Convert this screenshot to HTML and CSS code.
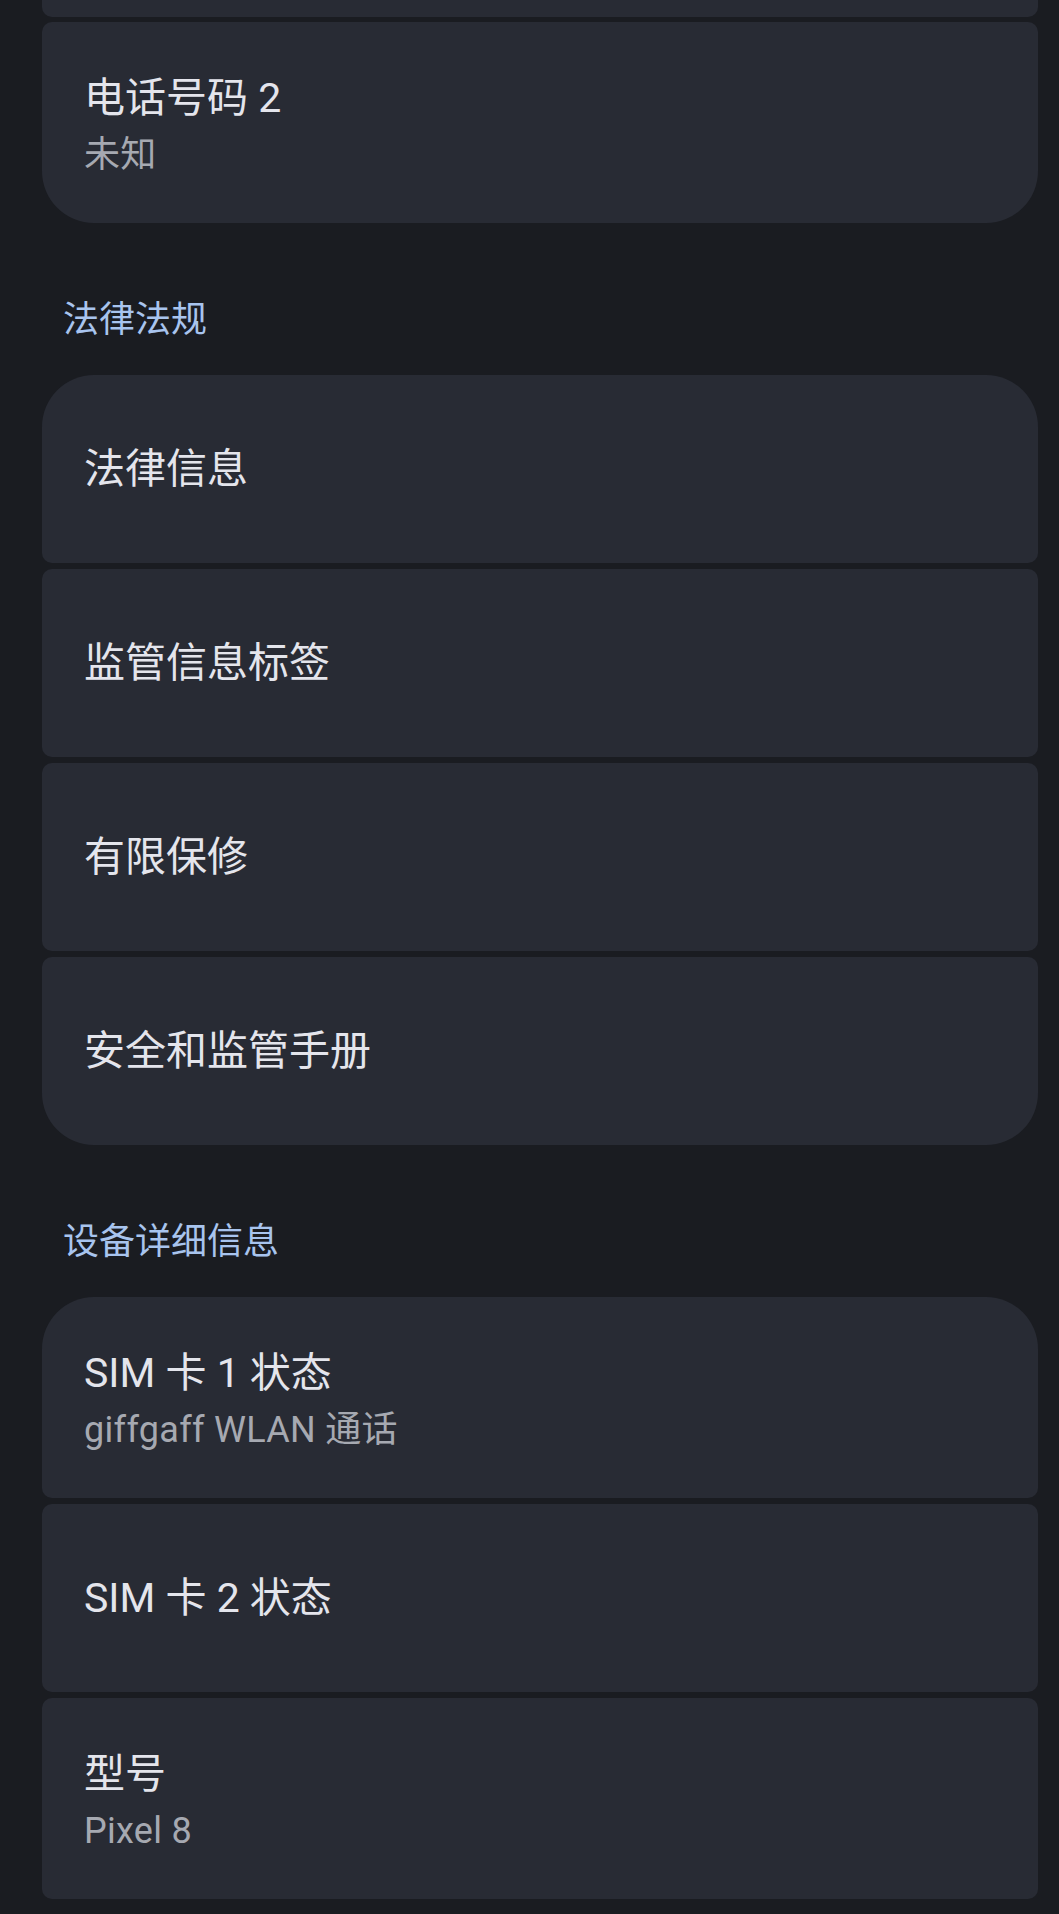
FILE: index.html
```html
<!DOCTYPE html>
<html lang="zh-CN">

<head>
    <meta charset="UTF-8" />
    <meta name="viewport" content="width=device-width, initial-scale=1.0" />
    <title>关于手机</title>
    <link rel="stylesheet" href="styles.css">
</head>

<body class="page">

    <main class="settings">

        <section class="group">
            <div class="card card-stub"></div>
            <div class="card card-last card-double">
                <p class="card-title">电话号码 2</p>
                <p class="card-summary">未知</p>
            </div>
        </section>

        <h3 class="group-header">法律法规</h3>
        <section class="group">
            <div class="card card-first">
                <p class="card-title">法律信息</p>
            </div>
            <div class="card">
                <p class="card-title">监管信息标签</p>
            </div>
            <div class="card">
                <p class="card-title">有限保修</p>
            </div>
            <div class="card card-last">
                <p class="card-title">安全和监管手册</p>
            </div>
        </section>

        <h3 class="group-header">设备详细信息</h3>
        <section class="group">
            <div class="card card-first card-double">
                <p class="card-title">SIM 卡 1 状态</p>
                <p class="card-summary">giffgaff WLAN 通话</p>
            </div>
            <div class="card">
                <p class="card-title">SIM 卡 2 状态</p>
            </div>
            <div class="card card-double">
                <p class="card-title">型号</p>
                <p class="card-summary">Pixel 8</p>
            </div>
        </section>

    </main>

</body>

</html>
```

FILE: styles.css
```css
.page {
    margin: 0;
    background-color: rgb(26, 28, 33);
    font-family: "Roboto", "Noto Sans CJK SC", sans-serif;
}

.settings {
    padding: 0 21px 0 42px;
}

.group {
    display: flex;
    flex-direction: column;
    gap: 6px;
}

.group-header {
    margin: 0;
    padding: 73px 0 31px 21px;
    font-size: 36px;
    font-weight: 400;
    line-height: 48px;
    color: rgb(168, 196, 238);
}

.card {
    display: flex;
    flex-direction: column;
    justify-content: center;
    height: 188px;
    box-sizing: border-box;
    padding: 0 42px;
    background-color: rgb(40, 43, 52);
    border-radius: 10px;
}

.card-first {
    border-radius: 52px 52px 10px 10px;
}

.card-last {
    border-radius: 10px 10px 52px 52px;
}

.card-stub {
    height: 17px;
    border-radius: 0 0 10px 10px;
}

.group .card-stub + .card {
    margin-top: -1px;
}

.card-double {
    height: 201px;
    justify-content: flex-start;
    padding-top: 50px;
}

.card-title {
    margin: 0;
    font-size: 41px;
    font-weight: 400;
    line-height: 52px;
    color: rgb(228, 229, 236);
}

.card-summary {
    margin: 9px 0 0 0;
    font-size: 36px;
    line-height: 44px;
    letter-spacing: 0.3px;
    color: rgb(166, 169, 177);
}
```
